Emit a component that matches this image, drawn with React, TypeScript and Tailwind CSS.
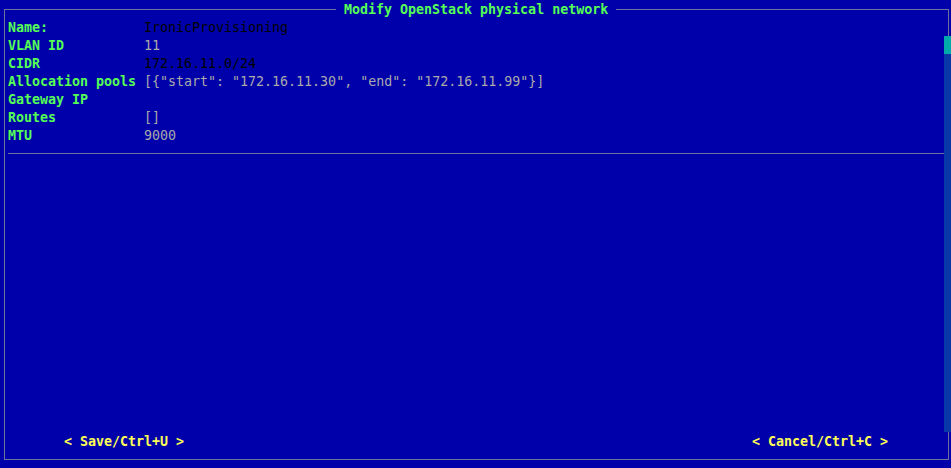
const fields: { label: string; value: string; tone: "black" | "gray" }[] = [
  { label: "Name:", value: "IronicProvisioning", tone: "black" },
  { label: "VLAN ID", value: "11", tone: "gray" },
  { label: "CIDR", value: "172.16.11.0/24", tone: "black" },
  {
    label: "Allocation pools",
    value: '[{"start": "172.16.11.30", "end": "172.16.11.99"}]',
    tone: "gray",
  },
  { label: "Gateway IP", value: "", tone: "gray" },
  { label: "Routes", value: "[]", tone: "gray" },
  { label: "MTU", value: "9000", tone: "gray" },
];

export default function App() {
  return (
    <div
      className="relative w-[951px] h-[468px] overflow-hidden bg-[#0000aa] text-[13.3px] leading-[18px] whitespace-pre"
      style={{ fontFamily: '"DejaVu Sans Mono", "Liberation Mono", monospace' }}
    >
      {/* Dialog frame */}
      <div className="relative ml-[4px] mt-[9px] w-[945px] h-[451px] border border-[#7070a0] flex flex-col">
        {/* Title sits over the top border */}
        <div className="absolute -top-[9px] left-[331px] px-[8px] bg-[#0000aa] font-bold text-[#55ff55]">
          Modify OpenStack physical network
        </div>

        <div className="pl-[3px] pt-[9px]">
          {fields.map((f) => (
            <div key={f.label} className="flex h-[18px]">
              <span className="w-[136px] shrink-0 font-bold text-[#55ff55]">{f.label}</span>
              <span className={f.tone === "black" ? "text-black" : "text-[#aaaaaa]"}>{f.value}</span>
            </div>
          ))}
        </div>

        {/* Separator */}
        <div className="ml-[3px] mt-[8px] w-[936px] h-px bg-[#7070a0]" />

        <div className="flex-1" />

        {/* Buttons */}
        <div className="flex h-[18px] mb-[8px] font-bold text-[#ffff55]">
          <span className="ml-[59px]">{"< Save/Ctrl+U >"}</span>
          <span className="ml-auto mr-[60px]">{"< Cancel/Ctrl+C >"}</span>
        </div>
      </div>

      {/* Scrollbar overlays the right border */}
      <div className="absolute left-[944px] top-[36px] w-[7px] h-[396px] bg-[#0a37a8]">
        <div className="h-[18px] bg-[#00aaaa]" />
      </div>
    </div>
  );
}
